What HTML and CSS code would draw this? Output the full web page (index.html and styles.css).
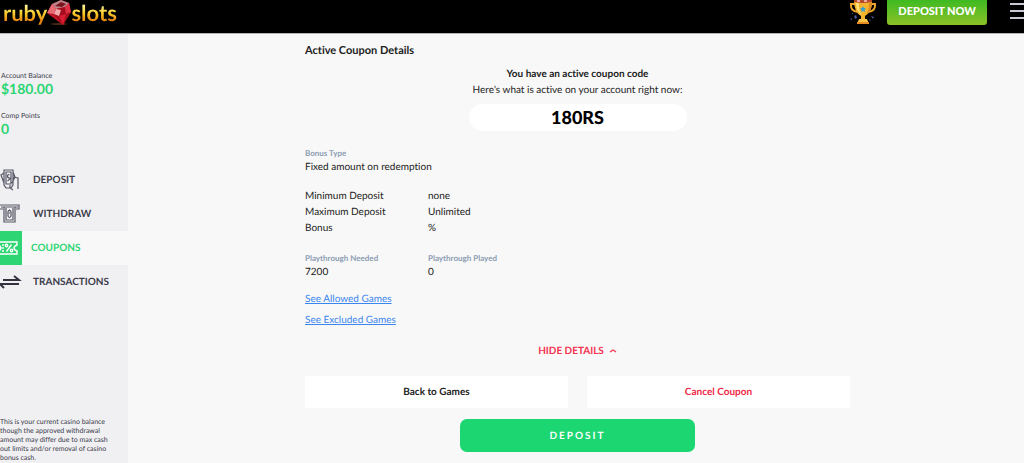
FILE: index.html
```html
<!DOCTYPE html>
<html lang="en">

<head>
    <meta charset="UTF-8">
    <meta name="viewport" content="width=device-width, initial-scale=1.0">
    <title>Ruby Slots - Coupons</title>
    <link rel="stylesheet" href="styles.css">
</head>

<body>
    <header class="topbar">
        <a href="#" class="logo">
            <span class="logo-text">ruby</span>
            <svg class="logo-gem" viewBox="0 0 26 26" aria-hidden="true">
                <ellipse cx="13" cy="24" rx="8" ry="1" fill="#4a2a10" />
                <path d="M1 13 6 4 15 0 23 3 25 12 17 25Z" fill="#c01426" />
                <path d="M6 4 15 0 23 3 19 7 10 9Z" fill="#b9838a" />
                <path d="M9 6 15 2 20 4 16 7Z" fill="#7c1420" />
                <path d="M1 13 6 4 10 9 8 14Z" fill="#e76a74" />
                <path d="M8 14 10 9 19 7 20 14 17 25Z" fill="#a50b1d" />
                <path d="M10 9 15 10 13 16 8 14Z" fill="#f3a9ac" />
                <path d="M23 3 25 12 20 14 19 7Z" fill="#dc3142" />
                <path d="M20 14 25 12 17 25Z" fill="#a5101f" />
                <path d="M13 16 20 14 17 25Z" fill="#d91f34" />
            </svg>
            <span class="logo-text">slots</span>
        </a>
        <div class="topbar-right">
            <svg class="trophy" viewBox="0 0 28 26" aria-hidden="true">
                <path d="M7 4H2Q1 11 9 12M21 4H26Q27 11 19 12" fill="none" stroke="#f0a72c" stroke-width="2" />
                <path d="M5 0H23Q23 12 16 16V20H12V16Q5 12 5 0Z" fill="#f7b52f" />
                <path d="M7 3H10Q9 10 13 15Q7 11 7 3Z" fill="#ffe07a" />
                <path d="M20 3H23Q23 11 17 15Q20 10 20 3Z" fill="#e08e22" />
                <path d="M5 0H23V2Q14 4 5 2Z" fill="#b64a2c" />
                <path d="M8 0h3v2H8zM15 0h3v2h-3z" fill="#e9a9a0" />
                <path d="m14 6 1 2 2 .5-1.500 1.500.5 2-2-1-2 1 .5-2L11 8.500l2-.5z" fill="#35a3cf" />
                <path d="M10 19H18L20 24H8Z" fill="#f9c544" />
                <path d="M8 22H20V24H8Z" fill="#e58b22" />
                <path d="m5 16 2-1 1 3-2 1zM1 19l2-1v2zM22 16l3 1-1 2zM20 19l2 1-1 1zM3 13h1v1H3z" fill="#4b5997" />
            </svg>
            <button type="button" class="deposit-now">DEPOSIT NOW</button>
            <button type="button" class="menu-btn" aria-label="Menu">
                <span></span><span></span><span></span>
            </button>
        </div>
    </header>

    <div class="page">
        <aside class="sidebar">
            <div class="balances">
                <div class="balance-label">Account Balance</div>
                <div class="balance-value">$180.00</div>
                <div class="balance-label">Comp Points</div>
                <div class="balance-value">0</div>
            </div>

            <nav class="menu">
                <a href="#" class="menu-item">
                    <span class="menu-icon">
                        <svg viewBox="0 0 22 24" aria-hidden="true">
                            <path d="M4 2H13V17L11 20H6L4 17ZM6 4H11V16H6ZM4 5 1 7 4 15M9.500 7Q7.500 6 7.500 8T9.500 10T7.500 13M13 4 15 9 12 15M13 9 18 10V21M10 17V20L13 22" />
                        </svg>
                    </span>
                    DEPOSIT
                </a>
                <a href="#" class="menu-item">
                    <span class="menu-icon">
                        <svg viewBox="0 0 22 24" aria-hidden="true">
                            <path d="M0 3H19V7H16M0 7H3M1 5H18M4 5V20H15V5M6 6V18H13V6" />
                            <path d="M9.500 8Q7.500 9 8 12V14Q9.500 17 11 14V12Q11.500 9 9.500 8ZM9 11H10" />
                        </svg>
                    </span>
                    WITHDRAW
                </a>
                <a href="#" class="menu-item active">
                    <span class="menu-icon">
                        <svg viewBox="0 0 22 24" aria-hidden="true">
                            <path d="M0 6H17V9Q14 10 14 12T17 15V18H0M3 8V10M3 11V13M3 14V16M11.500 8.500 6.500 15.500" />
                            <circle cx="6.500" cy="9.500" r="1.200" />
                            <circle cx="11.500" cy="14.500" r="1.200" />
                            <path d="M0 10Q2 12 0 14Z" fill="#fff" />
                        </svg>
                    </span>
                    COUPONS
                </a>
                <a href="#" class="menu-item">
                    <span class="menu-icon">
                        <svg class="arrows" viewBox="0 0 22 24" aria-hidden="true">
                            <path d="M3 10H19L14 6M19 14H0L4 18" />
                        </svg>
                    </span>
                    TRANSACTIONS
                </a>
            </nav>

            <p class="disclaimer">This is your current casino balance though the approved withdrawal amount may differ due to max cash out limits and/or removal of casino bonus cash.</p>
        </aside>

        <main class="content">
            <div class="coupon">
                <h1>Active Coupon Details</h1>

                <div class="coupon-head">
                    <h2>You have an active coupon code</h2>
                    <p>Here's what is active on your account right now:</p>
                    <div class="coupon-code">180RS</div>
                </div>

                <div class="label">Bonus Type</div>
                <div class="value">Fixed amount on redemption</div>

                <table class="limits">
                    <tr>
                        <th scope="row">Minimum Deposit</th>
                        <td>none</td>
                    </tr>
                    <tr>
                        <th scope="row">Maximum Deposit</th>
                        <td>Unlimited</td>
                    </tr>
                    <tr>
                        <th scope="row">Bonus</th>
                        <td>%</td>
                    </tr>
                </table>

                <div class="playthrough">
                    <div>
                        <div class="label">Playthrough Needed</div>
                        <div class="value">7200</div>
                    </div>
                    <div>
                        <div class="label">Playthrough Played</div>
                        <div class="value">0</div>
                    </div>
                </div>

                <div class="game-links">
                    <a href="#">See Allowed Games</a>
                    <a href="#">See Excluded Games</a>
                </div>

                <button type="button" class="hide-details">
                    HIDE DETAILS
                    <svg viewBox="0 0 8 6" aria-hidden="true">
                        <path d="M1 4 4 2 7 4" />
                    </svg>
                </button>

                <div class="actions">
                    <button type="button" class="action-btn">Back to Games</button>
                    <button type="button" class="action-btn cancel">Cancel Coupon</button>
                </div>
                <button type="button" class="deposit-btn">DEPOSIT</button>
            </div>
        </main>
    </div>
</body>

</html>
```
FILE: styles.css
```css
* {
    box-sizing: border-box;
}

body {
    margin: 0;
    min-height: 100vh;
    display: flex;
    flex-direction: column;
    font-family: Lato, "Liberation Sans", sans-serif;
    font-size: 10px;
    font-variant-ligatures: none;
    text-rendering: geometricPrecision;
    line-height: 16px;
    color: #222;
    background-color: #f8f8f8;
}

h1, h2, p {
    margin: 0;
}

button {
    font-family: inherit;
    border: none;
    cursor: pointer;
    text-rendering: inherit;
}

/* header */
.topbar {
    display: flex;
    justify-content: space-between;
    align-items: flex-start;
    height: 34px;
    background-color: #000;
    border-bottom: 1px solid #b5b5b5;
}

.logo {
    display: flex;
    align-items: flex-start;
    padding-left: 3px;
    text-decoration: none;
}

.logo-text {
    font-size: 22px;
    font-weight: bold;
    line-height: 26px;
    color: transparent;
    background: linear-gradient(#fff3a0 20%, #f9cf2c 50%, #e8850f 80%);
    -webkit-background-clip: text;
    background-clip: text;
}

.logo-gem {
    width: 26px;
    height: 26px;
    margin: 0 -1px;
}

.topbar-right {
    display: flex;
    align-items: flex-start;
}

.trophy {
    width: 28px;
    height: 26px;
    margin-right: 10px;
}

.deposit-now {
    height: 25px;
    padding: 0 11px 3px;
    color: #fff;
    font-size: 11px;
    font-weight: 900;
    background: linear-gradient(#3fba22, #8bc127);
    border-radius: 0 0 3px 3px;
}

.menu-btn {
    display: flex;
    flex-direction: column;
    gap: 5px;
    width: 37px;
    padding: 3px 0 0 23px;
    background: none;
}

.menu-btn span {
    height: 2px;
    background-color: #c9c9d6;
}

.page {
    flex: 1;
    display: flex;
}

/* sidebar */
.sidebar {
    display: flex;
    flex-direction: column;
    width: 128px;
    flex-shrink: 0;
    background-color: #f0f0f3;
}

.balances {
    padding: 37px 0 0 1px;
}

.balance-label {
    font-size: 7px;
    line-height: 10px;
    color: #3c3c4a;
}

.balance-value {
    margin-bottom: 14px;
    font-size: 14px;
    font-weight: bold;
    line-height: 16px;
    color: #2ed573;
}

.menu {
    margin-top: 12px;
}

.menu-item {
    display: flex;
    align-items: center;
    gap: 11px;
    height: 34px;
    color: #3c3c4a;
    font-size: 10px;
    font-weight: bold;
    text-decoration: none;
}

.menu-icon {
    display: flex;
    align-items: center;
    width: 22px;
    height: 34px;
}

.menu-icon svg {
    width: 22px;
    height: 24px;
    fill: none;
    stroke: #565665;
    stroke-width: 1.2;
}

.menu-icon .arrows {
    stroke: #333340;
    stroke-width: 2;
}

.menu-item.active {
    gap: 9px;
    color: #2ed573;
    background-color: #f8f8f8;
}

.active .menu-icon {
    background-color: #2ed573;
}

.active .menu-icon svg {
    stroke: #fff;
    stroke-width: 1.4;
}

.disclaimer {
    margin-top: auto;
    padding-right: 14px;
    font-size: 7px;
    line-height: 9px;
    color: #3c3c4a;
}

/* coupon details */
.content {
    flex: 1;
    padding: 9px 0 11px 3px;
}

.coupon {
    display: flex;
    flex-direction: column;
    max-width: 545px;
    margin: 0 auto;
}

h1 {
    font-size: 11px;
    font-weight: bold;
    line-height: 16px;
}

.coupon-head {
    display: flex;
    flex-direction: column;
    align-items: center;
    margin: 7px 0 15px;
}

h2 {
    font-size: 10px;
    line-height: 16px;
}

.coupon-code {
    width: 40%;
    margin-top: 6px;
    text-align: center;
    font-size: 18px;
    font-weight: 900;
    line-height: 27px;
    color: #000;
    background-color: #fff;
    border-radius: 14px;
}

.label {
    font-size: 8px;
    font-weight: bold;
    line-height: 14px;
    color: #8c9db3;
}

.value {
    line-height: 15px;
}

.limits {
    width: 100%;
    margin: 13px 0 15px;
    border-collapse: collapse;
}

.limits th,
.limits td {
    padding: 0;
    font-weight: normal;
    text-align: left;
}

.limits th {
    width: 123px;
}

.playthrough {
    display: grid;
    grid-template-columns: 123px 1fr;
}

.game-links {
    display: flex;
    flex-direction: column;
    align-items: flex-start;
    gap: 5px;
    margin-top: 11px;
}

.game-links a {
    color: #3b86ee;
}

.hide-details {
    align-self: center;
    display: flex;
    align-items: center;
    gap: 5px;
    margin-top: 15px;
    padding: 0;
    font-size: 10px;
    font-weight: bold;
    line-height: 16px;
    color: #f5304f;
    background: none;
}

.hide-details svg {
    width: 8px;
    height: 6px;
    fill: none;
    stroke: #f5304f;
    stroke-width: 1.2;
}

.actions {
    display: grid;
    grid-template-columns: 1fr 1fr;
    gap: 19px;
    margin-top: 17px;
}

.action-btn {
    height: 32px;
    font-size: 10px;
    font-weight: bold;
    color: #222;
    background-color: #fff;
}

.action-btn.cancel {
    color: #ee2745;
}

.deposit-btn {
    align-self: center;
    width: 235px;
    height: 33px;
    margin-top: 11px;
    color: #fff;
    font-size: 10px;
    font-weight: bold;
    letter-spacing: 2px;
    background-color: #1cd672;
    border-radius: 7px;
}
```
